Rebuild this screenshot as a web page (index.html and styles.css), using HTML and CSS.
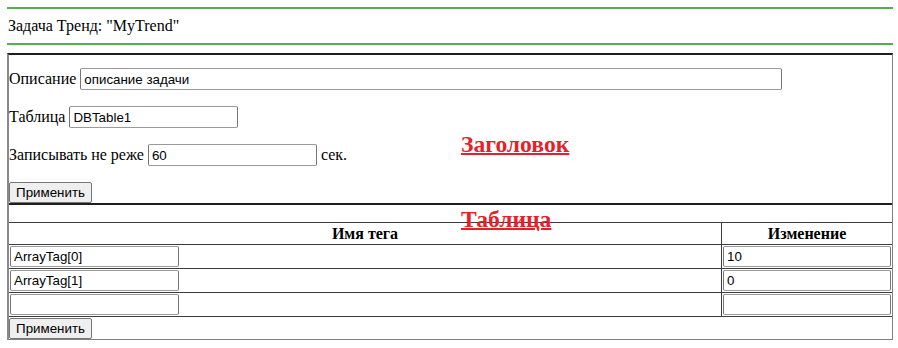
FILE: index.html
```html
<!DOCTYPE html>
<html lang="ru">
<head>
<meta charset="utf-8">
<title>Задача Тренд</title>
<link rel="stylesheet" href="styles.css">
</head>
<body>

<div class="rule"></div>
<div class="title">Задача Тренд: "MyTrend"</div>
<div class="rule"></div>

<div class="task">
  <form class="head-form">
    <div class="row">Описание <input class="inp inp-desc" value="описание задачи"></div>
    <div class="row">Таблица <input class="inp" value="DBTable1"></div>
    <div class="row">Записывать не реже <input class="inp" value="60"> сек.</div>
    <div class="row"><button type="button" class="btn">Применить</button></div>
  </form>

  <table class="tags">
    <tr class="blank"><td colspan="2"></td></tr>
    <tr class="hdr"><th>Имя тега</th><th class="col-val">Изменение</th></tr>
    <tr><td><input class="inp inp-cell" value="ArrayTag[0]"></td><td class="col-val"><input class="inp inp-cell inp-full" value="10"></td></tr>
    <tr><td><input class="inp inp-cell" value="ArrayTag[1]"></td><td class="col-val"><input class="inp inp-cell inp-full" value="0"></td></tr>
    <tr><td><input class="inp inp-cell" value=""></td><td class="col-val"><input class="inp inp-cell inp-full" value=""></td></tr>
    <tr class="foot"><td colspan="2"><button type="button" class="btn">Применить</button></td></tr>
  </table>

  <!-- section labels drawn over the form -->
  <span class="note note-head">Заголовок</span>
  <span class="note note-table">Таблица</span>
</div>

</body>
</html>
```

FILE: styles.css
```css
body{margin:7px 5px 0 7px;font-family:"Liberation Serif","Times New Roman",serif;font-size:16px;color:#000;background:#fff}
.rule{height:2px;background:#55ad4f}
.title{height:34px;line-height:34px;padding-left:1px}
.task{position:relative;margin-top:8px;border:1px solid #808080;border-top:2px solid #1e1e1e;border-left:2px solid #8a8a8a}
.head-form{margin:0;padding:13px 0 0 0}
.row{display:flex;align-items:center;gap:4px;margin-bottom:16px;height:22px;white-space:nowrap}
.row:last-child{margin-bottom:0;height:21px}
.inp{box-sizing:border-box;height:22px;width:169px;padding:1px 3px;font:13.33px "Liberation Sans",Arial,sans-serif;color:#000;
     border:1px solid #9a9a9a;border-right-color:#767676;border-left-color:#767676;border-radius:2px;background:#fff}
.inp-desc{width:702px}
.btn{box-sizing:border-box;height:21px;width:83px;padding:0 6px;font:13.33px "Liberation Sans",Arial,sans-serif;color:#000;
     background:#efefef;border:1px solid #767676;border-radius:2px}
.tags{width:100%;border-collapse:collapse;border-top:2px solid #1e1e1e}
.tags td,.tags th{border:1px solid #3c3c3c;padding:1px;border-left:0;border-right:0}
.tags .col-val{width:168px;border-left:1px solid #3c3c3c}
.tags .blank td{height:15px}
.tags th{height:19px;font-weight:bold;font-size:16px;line-height:19px}
.tags .foot td{border-bottom:0;padding:1px 0 0}
.inp-cell{height:21px}
.inp-full{width:100%}
.note{position:absolute;left:452px;font-size:23.6px;line-height:24px;font-weight:bold;color:#e81e2a;text-decoration:underline;text-decoration-thickness:2px}
.note-head{top:77px}
.note-table{top:152px}
```
